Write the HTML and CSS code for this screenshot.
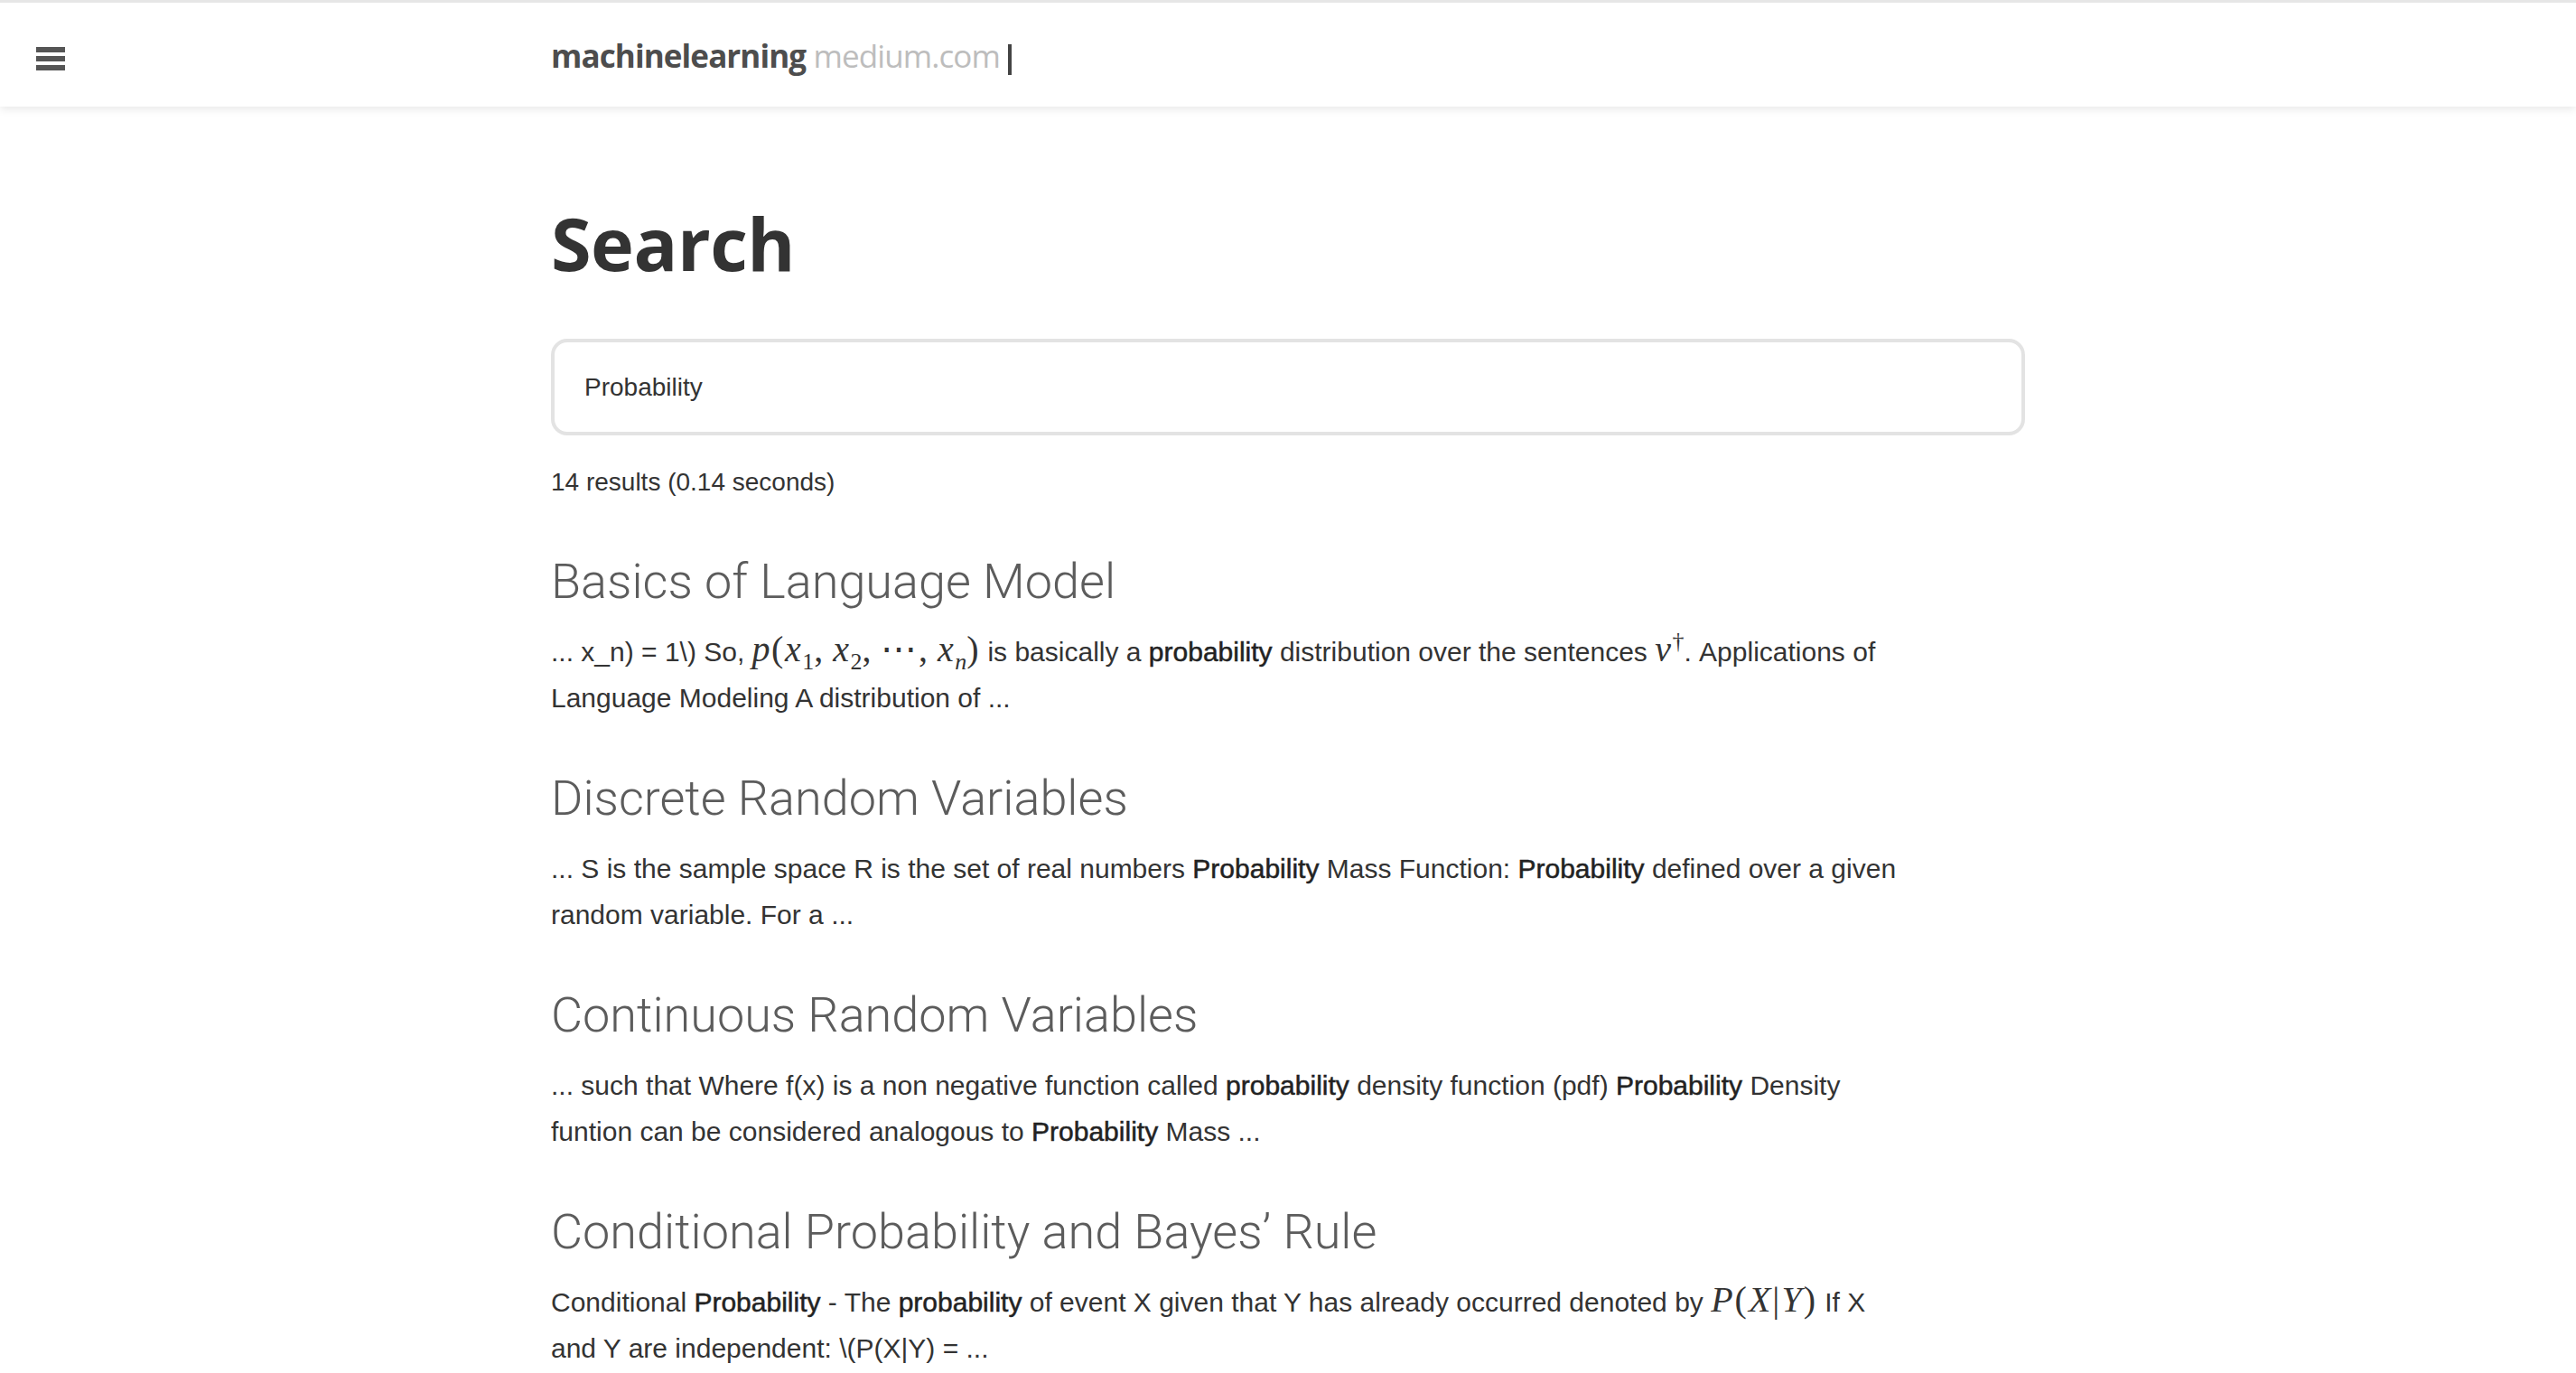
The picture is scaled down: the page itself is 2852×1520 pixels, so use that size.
FILE: index.html
```html
<!DOCTYPE html>
<html lang="en">
<head>
<meta charset="utf-8">
<title>Search - machinelearning medium.com</title>
<link rel="stylesheet" href="styles.css">
</head>
<body>
<header class="topbar">
  <div class="menu-cell">
    <div class="menu" aria-label="Menu"><span></span><span></span><span></span></div>
  </div>
  <div class="brand"><span class="brand-main">machinelearning</span> <span class="brand-sub">medium.com</span><span class="caret"></span></div>
  <div></div>
</header>

<main class="container">
  <h1 class="page-title">Search</h1>
  <div class="search-box"><span class="search-value">Probability</span></div>
  <div class="result-count">14 results (0.14 seconds)</div>

  <section class="results">
    <article class="result">
      <h2 class="result-title">Basics of Language Model</h2>
      <p class="snippet">... x_n) = 1\) So, <span class="math"><i>p</i>(<i>x</i><sub>1</sub>,&#8201;<i>x</i><sub>2</sub>,&#8201;⋯,&#8201;<i>x</i><sub><i>n</i></sub>)</span> is basically a <span class="hl">probability</span> distribution over the sentences <span class="math"><i>ν</i><sup>†</sup></span>. Applications of Language Modeling A distribution of ...</p>
    </article>
    <article class="result">
      <h2 class="result-title">Discrete Random Variables</h2>
      <p class="snippet">... S is the sample space R is the set of real numbers <span class="hl">Probability</span> Mass Function: <span class="hl">Probability</span> defined over a given random variable. For a ...</p>
    </article>
    <article class="result">
      <h2 class="result-title">Continuous Random Variables</h2>
      <p class="snippet">... such that Where f(x) is a non negative function called <span class="hl">probability</span> density function (pdf) <span class="hl">Probability</span> Density funtion can be considered analogous to <span class="hl">Probability</span> Mass ...</p>
    </article>
    <article class="result">
      <h2 class="result-title">Conditional Probability and Bayes’ Rule</h2>
      <p class="snippet">Conditional <span class="hl">Probability</span> - The <span class="hl">probability</span> of event X given that Y has already occurred denoted by <span class="math math-wide"><i>P</i>(<i>X</i>|<i>Y</i>)</span> If X and Y are independent: \(P(X|Y) = ...</p>
    </article>
  </section>
</main>
</body>
</html>
```

FILE: styles.css
```css
html, body {
  margin: 0;
  padding: 0;
  background: #ffffff;
}

body {
  font-family: "Liberation Sans", Arial, sans-serif;
  color: #333333;
  overflow: hidden;
}

.topbar {
  display: grid;
  grid-template-columns: 1fr 1632px 1fr;
  align-items: center;
  height: 115px;
  border-top: 3px solid #e6e6e6;
  background: #ffffff;
  box-shadow: 0 3px 9px rgba(0, 0, 0, 0.09);
  position: relative;
  z-index: 2;
}

.menu-cell {
  padding-left: 40px;
  display: flex;
  align-items: center;
}

.menu {
  display: flex;
  flex-direction: column;
  gap: 4px;
  width: 32px;
  margin-top: 8px;
}

.menu span {
  display: block;
  height: 6px;
  background: #555555;
}

.brand {
  font-family: "Open Sans", sans-serif;
  font-size: 35px;
  line-height: 48px;
  letter-spacing: -0.9px;
  white-space: nowrap;
  margin-top: 2px;
}

.brand-main {
  font-weight: 700;
  color: #4d4d4d;
}

.brand-sub {
  font-weight: 400;
  color: #bdbdbd;
}

.caret {
  display: inline-block;
  width: 4px;
  height: 34px;
  background: #444444;
  margin-left: 9px;
  vertical-align: -8px;
}

.container {
  width: 1632px;
  margin: 0 auto;
}

.page-title {
  font-family: "Open Sans", sans-serif;
  font-weight: 700;
  font-size: 81px;
  line-height: 97px;
  color: #333333;
  margin: 102px 0 0 0;
  letter-spacing: -0.5px;
}

.search-box {
  box-sizing: border-box;
  margin-top: 58px;
  height: 107px;
  border: 4px solid #e3e3e3;
  border-radius: 18px;
  padding: 0 33px;
  display: flex;
  align-items: center;
}

.search-value {
  font-size: 28px;
  color: #333333;
}

.result-count {
  margin-top: 32px;
  font-size: 28px;
  line-height: 40px;
  color: #333333;
}

.results {
  margin-top: 58px;
}

.result-title {
  font-family: "Roboto", "Liberation Sans", sans-serif;
  font-weight: 300;
  font-size: 54px;
  line-height: 64px;
  color: #5c5c5c;
  margin: 0 0 20px 0;
}

.snippet {
  font-size: 30px;
  line-height: 51px;
  color: #333333;
  margin: 0 0 54px 0;
  max-width: 1500px;
}

.hl {
  color: #222222;
  -webkit-text-stroke: 0.5px #222222;
}

.math {
  font-family: "Liberation Serif", "DejaVu Serif", serif;
  font-size: 40px;
  letter-spacing: 1.5px;
  line-height: 0;
  white-space: nowrap;
}

.math-wide {
  letter-spacing: 2px;
}

.math sub, .math sup {
  font-size: 26px;
  line-height: 0;
  letter-spacing: 0;
}
```
